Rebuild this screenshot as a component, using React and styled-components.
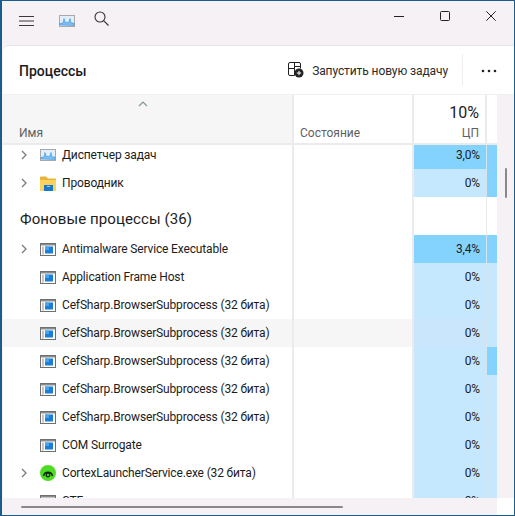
import React from "react";
import styled, { createGlobalStyle } from "styled-components";

const Global = createGlobalStyle`
  html, body { margin: 0; padding: 0; background: #fff; }
  body { font-family: Roboto, "Noto Sans", sans-serif; color: #1a1a1a; }
`;
const Win = styled.div`
  width: 515px; height: 516px; box-sizing: border-box; overflow: hidden;
  border: 1px solid #1c5c8c; border-left-width: 2px;
  background: #f5f1f5; display: flex; flex-direction: column; position: relative;
`;
const TitleBar = styled.div`
  height: 44px; flex: none; display: flex; align-items: flex-start;
`;
const LeftTools = styled.div`
  display: flex; align-items: center; margin-left: 17px; margin-top: 14px;
`;
const Burger = styled.svg` display: block; `;
const Monitor = styled.svg` display: block; margin-left: 25px; margin-top: -1px; `;
const Search = styled.svg` display: block; margin-left: 19px; margin-top: -5px; `;
const WinButtons = styled.div`
  margin-left: auto; display: flex;
`;
const WinButton = styled.div`
  width: 46px; height: 30px; display: flex; align-items: center; justify-content: center;
`;
const Panel = styled.div`
  flex: 1; min-height: 0; margin-left: 1px; background: #fff; border-top: 1px solid #e6e4e6;
  border-top-left-radius: 6px; display: flex; flex-direction: column;
`;
const PanelHead = styled.div`
  height: 46px; padding-top: 2px; flex: none; display: flex; align-items: center; padding-left: 16px; border-bottom: 1px solid #f1f0f1;
`;
const Title = styled.div`
  font-size: 14px; font-weight: 500; letter-spacing: 0; color: #1c1c1c;
`;
const Command = styled.div`
  margin-left: auto; display: flex; align-items: center; font-size: 12px; letter-spacing: -0.1px; color: #2a2a2a; gap: 8px;
`;
const CommandIcon = styled.svg`
  display: block; margin-top: -2px;
`;
const CmdDivider = styled.div`
  width: 1px; height: 32px; background: #efedef; margin-left: 6px; margin-top: -2px;
`;
const More = styled.div`
  width: 51px; height: 32px; display: flex; align-items: center; justify-content: center;
`;
const Body = styled.div`
  flex: 1; min-height: 0; display: grid; grid-template-columns: 494px 17px; grid-template-rows: 1fr 17px;
`;
const TableWrap = styled.div`
  display: flex; flex-direction: column; min-height: 0; overflow: hidden; background: #fff;
`;
const Cols = "291px 120px 73px 10px";
const HeadRow = styled.div`
  display: grid; grid-template-columns: ${Cols}; height: 48px; flex: none; border-bottom: 2px solid #ecebec;
`;
const HeadCell = styled.div`
  position: relative; border-right: 2px solid #ecebec; font-size: 12px; letter-spacing: 0; color: #5f5f5f;
  display: flex; flex-direction: column; justify-content: flex-end; padding: 0 6px 3px 6px;
  background: ${p => p.$shade ? "#f6f6f6" : "#fff"};
  align-items: ${p => p.$end ? "flex-end" : "flex-start"};
  padding-left: ${p => p.$name ? "16px" : "6px"};
`;
const SortMark = styled.svg`
  position: absolute; left: 135px; top: 6px;
`;
const Percent = styled.div`
  font-size: 16px; color: #222; line-height: 20px; margin-bottom: 3px;
`;
const Scroller = styled.div`
  flex: 1; min-height: 0; overflow: hidden;
`;
const Rows = styled.div`
  margin-top: -4px;
`;
const Row = styled.div`
  display: grid; grid-template-columns: ${Cols}; height: 28px; font-size: 12px; letter-spacing: -0.15px; color: #1c1c1c;
  background: ${p => p.$hover ? "#f6f6f6" : "transparent"};
`;
const NameCell = styled.div`
  display: flex; align-items: center; border-right: 2px solid #ecebec; padding-left: 17px; box-sizing: border-box;
`;
const Status = styled.div`
  border-right: 2px solid #ecebec;
`;
const Cpu = styled.div`
  display: flex; align-items: center; justify-content: flex-end; padding-right: 6px; box-sizing: border-box;
  border-right: 1px solid ${p => p.$bg ? "#d8e4ec" : "#ecebec"};
  background: ${p => p.$hover ? "#c9e6fd" : p.$bg};
`;
const Next = styled.div`
  background: ${p => p.$bg};
`;
const Chevron = styled.div`
  width: 20px; flex: none; display: flex; align-items: center;
`;
const AppName = styled.span`
  margin-left: 6px; white-space: nowrap;
`;
const Section = styled.div`
  display: grid; grid-template-columns: ${Cols}; height: 38px;
`;
const SectionName = styled.div`
  padding-left: 17px; padding-top: 13px; font-size: 15px; letter-spacing: 0.1px; color: #1c1c1c; border-right: 2px solid #ecebec; box-sizing: border-box;
`;
const VTrack = styled.div`
  background: #f5f1f5; position: relative;
`;
const VThumb = styled.div`
  position: absolute; left: 8px; top: 73px; width: 2px; height: 30px; background: #8a888a; border-radius: 1px;
`;
const HTrack = styled.div`
  background: #f5f1f5; position: relative;
`;
const HThumb = styled.div`
  position: absolute; left: 18px; top: 8px; width: 322px; height: 2px; background: #8a888a; border-radius: 1px;
`;
const Corner = styled.div`
  background: #fff;
`;
const IconSvg = styled.svg`
  display: block; flex: none;
`;

const Chev = () => (
  <svg width="8" height="10" viewBox="0 0 8 10"><path d="M2 1l4 4-4 4" fill="none" stroke="#7b7b7b" strokeWidth="1.3" /></svg>
);
const GraphShape = () => (
  <>
    <rect x=".5" y=".5" width="15" height="11" fill="#e4eef8" stroke="#a9a9a9" />
    <path d="M1 10V8.500L4 8 5 3.500 6.500 8 8 7 9.500 8 11 3.500 12 8h3v2.500z" fill="#7cc0f5" stroke="#3a8fdc" strokeWidth=".6" />
  </>
);
const GraphIcon = () => (
  <IconSvg width="16" height="12" viewBox="0 0 16 12"><GraphShape /></IconSvg>
);
const AppIcon = () => (
  <IconSvg width="16" height="13" viewBox="0 0 16 13">
    <rect x=".5" y=".5" width="15" height="12" fill="#fff" stroke="#6f6f6f" />
    <rect x="1" y="1" width="14" height="1.500" fill="#8b8b8b" />
    <rect x="2" y="3.500" width="2" height="8" fill="#c6c6c6" />
    <rect x="5" y="3.500" width="8" height="7" fill="#1b7ed6" />
    <rect x="5" y="3.500" width="4" height="3.500" fill="#48a4ee" />
  </IconSvg>
);
const FolderIcon = () => (
  <IconSvg width="16" height="15" viewBox="0 0 16 15">
    <path d="M0 1.500a1 1 0 0 1 1-1h5l2 2h7a1 1 0 0 1 1 1V14H0z" fill="#e9b33a" />
    <path d="M0 4h16v10a1 1 0 0 1-1 1H1a1 1 0 0 1-1-1z" fill="#fcd25e" />
    <rect x="4" y="9" width="9" height="6" fill="#1a78c8" />
    <rect x="7" y="10" width="3" height="1" fill="#9fd0f5" />
  </IconSvg>
);
const CortexIcon = () => (
  <IconSvg width="16" height="16" viewBox="0 0 16 16">
    <circle cx="8" cy="8" r="8" fill="#4fdc24" />
    <path d="M3.500 11a4.600 4.600 0 0 1 9 0" fill="none" stroke="#10240c" strokeWidth="1.500" />
    <circle cx="8" cy="10" r="1.800" fill="none" stroke="#10240c" strokeWidth="1.300" />
  </IconSvg>
);

const LIGHT = "#c5e8fe";
const STRONG = "#84d3fe";

const data = [
  { name: "Диспетчер задач", cpu: "3,0%", icon: <GraphIcon />, chev: true, bg: STRONG, next: STRONG },
  { name: "Проводник", cpu: "0%", icon: <FolderIcon />, chev: true, bg: LIGHT, next: STRONG },
  { section: "Фоновые процессы (36)" },
  { name: "Antimalware Service Executable", cpu: "3,4%", icon: <AppIcon />, chev: true, bg: STRONG, next: STRONG },
  { name: "Application Frame Host", cpu: "0%", icon: <AppIcon />, bg: LIGHT, next: LIGHT },
  { name: "CefSharp.BrowserSubprocess (32 бита)", cpu: "0%", icon: <AppIcon />, bg: LIGHT, next: LIGHT },
  { name: "CefSharp.BrowserSubprocess (32 бита)", cpu: "0%", icon: <AppIcon />, bg: LIGHT, next: LIGHT, hover: true },
  { name: "CefSharp.BrowserSubprocess (32 бита)", cpu: "0%", icon: <AppIcon />, bg: LIGHT, next: STRONG },
  { name: "CefSharp.BrowserSubprocess (32 бита)", cpu: "0%", icon: <AppIcon />, bg: LIGHT, next: LIGHT },
  { name: "CefSharp.BrowserSubprocess (32 бита)", cpu: "0%", icon: <AppIcon />, bg: LIGHT, next: LIGHT },
  { name: "COM Surrogate", cpu: "0%", icon: <AppIcon />, bg: LIGHT, next: LIGHT },
  { name: "CortexLauncherService.exe (32 бита)", cpu: "0%", icon: <CortexIcon />, chev: true, bg: LIGHT, next: LIGHT },
  { name: "CTF", cpu: "0%", icon: <AppIcon />, bg: LIGHT, next: LIGHT },
];

export default function App() {
  return (
    <>
      <Global />
      <Win>
        <TitleBar>
          <LeftTools>
            <Burger width="15" height="12" viewBox="0 0 15 12"><path d="M0 1.500h15M0 6h15M0 10.500h15" stroke="#3a3a3a" strokeWidth="1" /></Burger>
            <Monitor width="16" height="12" viewBox="0 0 16 12"><GraphShape /></Monitor>
            <Search width="15" height="15" viewBox="0 0 15 15">
              <circle cx="6" cy="6" r="5" fill="none" stroke="#333" strokeWidth="1.100" />
              <path d="M9.600 9.600L14.500 14.500" stroke="#333" strokeWidth="1.100" />
            </Search>
          </LeftTools>
          <WinButtons>
            <WinButton><svg width="10" height="10" viewBox="0 0 10 10"><path d="M0 5.500h10" stroke="#222" /></svg></WinButton>
            <WinButton><svg width="10" height="10" viewBox="0 0 10 10"><rect x=".5" y=".5" width="9" height="9" rx="1" fill="none" stroke="#222" /></svg></WinButton>
            <WinButton><svg width="10" height="10" viewBox="0 0 10 10"><path d="M.3.300l9.400 9.400M9.700.300L.3 9.700" stroke="#222" /></svg></WinButton>
          </WinButtons>
        </TitleBar>
        <Panel>
          <PanelHead>
            <Title>Процессы</Title>
            <Command>
              <CommandIcon width="16" height="16" viewBox="0 0 16 16">
                <path d="M6.500 13.500H2a1.500 1.500 0 0 1-1.500-1.500V2A1.500 1.500 0 0 1 2 .5h9A1.500 1.500 0 0 1 12.500 2v4.500M.5 6.500h6M6.500.5v13M6.500 4.500h6" fill="none" stroke="#222" />
                <circle cx="11" cy="11" r="4.500" fill="#222" />
                <path d="M11 8.800v4.400M8.800 11h4.400" stroke="#fff" strokeWidth="1" />
              </CommandIcon>
              Запустить новую задачу
              <CmdDivider />
            </Command>
            <More>
              <svg width="16" height="4" viewBox="0 0 16 4"><circle cx="2" cy="2" r="1.300" fill="#222" /><circle cx="8" cy="2" r="1.300" fill="#222" /><circle cx="14" cy="2" r="1.300" fill="#222" /></svg>
            </More>
          </PanelHead>
          <Body>
            <TableWrap>
              <HeadRow>
                <HeadCell $shade $name>
                  <SortMark width="10" height="6" viewBox="0 0 10 6"><path d="M1 5l4-4 4 4" fill="none" stroke="#7f9a94" strokeWidth="1.200" /></SortMark>
                  Имя
                </HeadCell>
                <HeadCell>Состояние</HeadCell>
                <HeadCell $end><Percent>10%</Percent>ЦП</HeadCell>
                <HeadCell />
              </HeadRow>
              <Scroller>
                <Rows>
                  {data.map((d, i) => d.section ? (
                    <Section key={i}>
                      <SectionName>{d.section}</SectionName>
                      <Status />
                      <Cpu />
                      <Next />
                    </Section>
                  ) : (
                    <Row key={i} $hover={d.hover}>
                      <NameCell>
                        <Chevron>{d.chev && <Chev />}</Chevron>
                        {d.icon}
                        <AppName>{d.name}</AppName>
                      </NameCell>
                      <Status />
                      <Cpu $bg={d.bg} $hover={d.hover}>{d.cpu}</Cpu>
                      <Next $bg={d.next} />
                    </Row>
                  ))}
                </Rows>
              </Scroller>
            </TableWrap>
            <VTrack><VThumb /></VTrack>
            <HTrack><HThumb /></HTrack>
            <Corner />
          </Body>
        </Panel>
      </Win>
    </>
  );
}
